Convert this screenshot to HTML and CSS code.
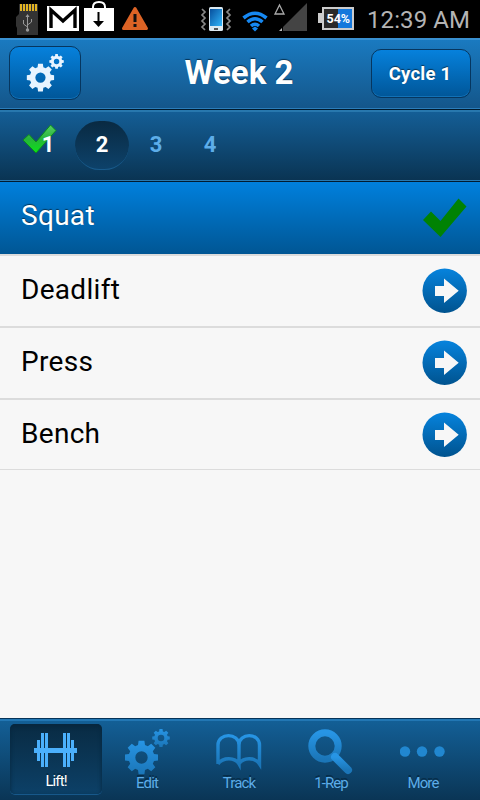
FILE: index.html
```
<!DOCTYPE html>
<html lang="en">
<head>
<meta charset="utf-8">
<title>Week 2</title>
<link rel="stylesheet" href="styles.css">
</head>
<body>
<svg class="defs" width="0" height="0">
  <defs>
    <linearGradient id="blue" x1="0" y1="0" x2="0" y2="1"><stop offset="0" stop-color="#0683dd"/><stop offset="1" stop-color="#00538f"/></linearGradient>
    <linearGradient id="icon" x1="0" y1="0" x2="0" y2="1"><stop offset="0" stop-color="#2795e5"/><stop offset="1" stop-color="#1b76b8"/></linearGradient>
    <linearGradient id="green" x1="0" y1="0" x2="0" y2="1"><stop offset="0" stop-color="#56d062"/><stop offset=".5" stop-color="#27b33b"/><stop offset="1" stop-color="#08e516"/></linearGradient>
    <linearGradient id="phone" x1="0" y1="0" x2="1" y2="1"><stop offset="0" stop-color="#064f9d"/><stop offset="1" stop-color="#31b5fa"/></linearGradient>
    <path id="gear" fill-rule="evenodd" d="M12.500-3.500 16.500-2.900V2.900L12.500 3.500 11.300 6.300 13.800 9.700 9.700 13.800 6.300 11.300 3.500 12.500 2.900 16.800H-2.900L-3.500 12.500-6.300 11.300-9.700 13.800-13.800 9.700-11.300 6.300-12.500 3.500-16.500 2.900V-2.900L-12.500-3.500-11.300-6.300-13.800-9.700-9.700-13.800-6.300-11.300-3.500-12.500-2.900-16.800H2.900L3.500-12.500 6.300-11.300 9.700-13.800 13.800-9.700 11.300-6.300ZM6.200 0A6.200 6.200 0 1 0-6.200 0 6.200 6.200 0 1 0 6.200 0Z"/>
    <symbol id="gears" viewBox="0 0 46 46"><use href="#gear" x="17.500" y="28.500"/><use href="#gear" transform="translate(37 9) scale(.53)"/></symbol>
    <symbol id="arrow" viewBox="0 0 46 46"><circle cx="22.700" cy="22.700" r="22.200" fill="url(#blue)"/><path fill="#f7f7f7" d="M13 18H22V10.500L36.700 22.700 22 35V28H13Z"/></symbol>
  </defs>
</svg>
<div class="status">
  <svg class="status-icons" width="360" height="38" viewBox="0 0 360 38">
    <path fill="#333" d="M19 4H38V35H17V28L16 26V17L19 14Z"/>
    <path stroke="#e2b321" stroke-width="2" d="M21 4V11M24 4V11M27 4V11M30 4V11M33 4V11M36 4V11"/>
    <path fill="none" stroke="#999" stroke-width="1" d="M27.500 15V31M27.500 27L23.500 24V20M27.500 25L31.500 22V19"/><circle cx="27.500" cy="30" r="1.700" fill="#999"/><path fill="#999" d="M25.500 17 27.500 14 29.500 17Z"/>
    <path fill="#fff" d="M47 6H79V31H47Z"/><path fill="none" stroke="#000" stroke-width="3.400" d="M51 28V10L63 21 75 10V28"/>
    <path fill="#fff" d="M84 8H114V31H84Z"/><path fill="none" stroke="#fff" stroke-width="2" d="M93 9V7Q93 2 99 2T105 7V9"/><path fill="none" stroke="#000" stroke-width="2" d="M98.500 12V23"/><path d="M93 21H104L98.500 27Z"/>
    <path fill="#dc6325" stroke="#dc6325" stroke-width="3" stroke-linejoin="round" d="M135 8.500 146.500 28.500H123.500Z"/><path stroke="#111" stroke-width="3" d="M135 14V22M135 24V27"/>
    <g fill="none" stroke="#888" stroke-width="1.700"><path d="M202 9l3 3-3 3 3 3-3 3 3 3-3 3 3 3M230 9l-3 3 3 3-3 3 3 3-3 3 3 3-3 3"/></g>
    <rect x="209" y="7" width="14" height="24" rx="1.500" fill="#dce9f1"/><path fill="url(#phone)" d="M210 9H222V26H210Z"/><path fill="#555" d="M214 28H218V30H214Z"/>
    <g fill="none" stroke="#1688f2" stroke-width="3.600"><path d="M243.500 18Q255 8.500 266.500 18M247.500 22Q255 15.500 262.500 22M251 26Q255 22.500 259 26"/></g><path fill="#1688f2" d="M252 28.500 255 26.500 258 28.500 255 31.500Z"/>
    <path fill="#444" d="M307 3V31H283V27Z"/><path fill="#bbb" d="M279 31 282 28V31Z"/><path fill="none" stroke="#aaa" stroke-width="1.300" d="M279.500 5 284 14H275Z"/>
    <path fill="#ccc" d="M318 13H322V23H318Z"/><rect x="323" y="8" width="30" height="21" fill="#292929" stroke="#ccc" stroke-width="2"/><path fill="#1478dc" d="M338 9H352V28H338Z"/>
    <text class="battery" x="326.500" y="22.500">54%</text>
  </svg>
  <span class="clock">12:39 AM</span>
</div>
<header class="header">
  <button class="btn settings"><svg width="38" height="38" fill="#e8f4ff"><use href="#gears"/></svg></button>
  <h1>Week 2</h1>
  <button class="btn cycle">Cycle 1</button>
</header>
<nav class="weeks">
  <a class="week done"><svg class="tick" width="36" height="31" viewBox="0 0 36 31"><path fill="url(#green)" stroke="#0d8b1c" d="M1 16 7 10.500 14 18 28.500 1 34 6.500 14 29Z"/></svg><span>1</span></a>
  <a class="week current"><span>2</span></a>
  <a class="week"><span>3</span></a>
  <a class="week"><span>4</span></a>
</nav>
<main>
  <div class="row active"><span>Squat</span><svg width="46" height="46" viewBox="0 0 46 46"><path fill="#008203" d="M1 25 9 16.500 18.500 26 36.500 3.500 44.500 11.500 18.500 42Z"/></svg></div>
  <div class="row"><span>Deadlift</span><svg width="46" height="46"><use href="#arrow"/></svg></div>
  <div class="row"><span>Press</span><svg width="46" height="46"><use href="#arrow"/></svg></div>
  <div class="row"><span>Bench</span><svg width="46" height="46"><use href="#arrow"/></svg></div>
</main>
<footer class="tabs">
  <a class="tab selected"><svg width="46" height="46" viewBox="0 0 46 46" fill="#4bb0fc"><path d="M1 19H44V24H1ZM4 11H7V32H4ZM8 4H11V38H8ZM12 4H15V38H12ZM30 4H33V38H30ZM34 4H37V38H34ZM38 11H41V32H38Z"/></svg><span>Lift!</span></a>
  <a class="tab"><svg width="46" height="46" fill="url(#icon)"><use href="#gears"/></svg><span>Edit</span></a>
  <a class="tab"><svg width="46" height="46" viewBox="0 0 46 46"><path fill="none" stroke="url(#icon)" stroke-width="3.400" d="M2 35V16C2 3.500 23 3.500 23 16V35C19 28 7 28 2 35M23 16C23 3.500 43.500 3.500 43.500 16V35C39 28 27 28 23 35"/></svg><span>Track</span></a>
  <a class="tab"><svg width="46" height="46" viewBox="0 0 46 46" fill="none" stroke="url(#icon)"><circle cx="17" cy="17" r="13.200" stroke-width="7"/><path stroke-width="8" stroke-linecap="round" d="M27 28 40 41"/></svg><span>1-Rep</span></a>
  <a class="tab"><svg width="46" height="46" viewBox="0 0 46 46" fill="#2187d0"><circle cx="5" cy="22.500" r="5.200"/><circle cx="22" cy="22.500" r="5.200"/><circle cx="39.500" cy="22.500" r="5.200"/></svg><span>More</span></a>
</footer>
</body>
</html>
```
FILE: styles.css
```
* { box-sizing: border-box; }
body {
  margin: 0;
  width: 480px;
  height: 800px;
  display: flex;
  flex-direction: column;
  background: #f7f7f7;
  font-family: Roboto, sans-serif;
  overflow: hidden;
}
.defs { position: absolute; }
svg { display: block; flex: none; }
.status {
  height: 38px;
  background: #000;
  display: flex;
  align-items: center;
}
.battery { font: bold 12.5px Roboto, sans-serif; fill: #fff; }
.clock {
  flex: 1;
  padding: 1px 0 0 7px;
  font-size: 24px;
  letter-spacing: 0.1px;
  color: #b4b4b4;
  white-space: nowrap;
}
.header {
  height: 71px;
  padding: 0 9px 2px;
  display: flex;
  align-items: center;
  justify-content: space-between;
  background: linear-gradient(#1a7ac0, #14568a);
  border-top: 2px solid #3990d0;
  border-bottom: 1px solid #2b7dba;
}
.header h1 {
  margin: 0 0 0 26px;
  flex: 1;
  text-align: center;
  font-size: 33px;
  line-height: 40px;
  color: #fff;
  text-shadow: 0 -1px 1px #073456;
}
.btn {
  font-family: inherit;
  border: 1px solid #06365f;
  border-radius: 10px;
  background: linear-gradient(#0681dc, #005698);
  box-shadow: inset 0 -1px #1271b6;
  color: #fff;
  padding: 0;
  display: flex;
  align-items: center;
  justify-content: center;
}
.settings { width: 72px; height: 54px; }
.cycle {
  width: 100px;
  height: 49px;
  margin-top: 1px;
  padding-right: 2px;
  font-size: 18.5px;
  letter-spacing: 0.2px;
  font-weight: bold;
  text-shadow: 0 -1px 1px #073456;
}
.weeks {
  height: 73px;
  padding: 11px 21px 0;
  display: flex;
  background: linear-gradient(#2878ae 0 2px, #145e96 2px, #0a3453 70px, #2779b1 70px 71px, #001b30 71px 72px, #3b9ce0 72px);
  border-top: 1px solid #001a2c;
}
.week {
  position: relative;
  width: 54px;
  height: 49px;
  line-height: 48px;
  text-align: center;
  font-size: 22px;
  font-weight: bold;
  color: #5dade9;
}
.week.done, .week.current { color: #fff; }
.week span { position: relative; }
.tick { position: absolute; left: 1px; top: 3px; }
.current {
  border-radius: 27px;
  background: linear-gradient(#092a42, #0d426a);
  border-bottom: 1px solid #195b8c;
}
main { flex: 1; }
.row {
  height: 72px;
  padding: 0 12px 0 21px;
  display: flex;
  align-items: center;
  justify-content: space-between;
  font-size: 28px;
  letter-spacing: 0.3px;
  color: #000;
  border-bottom: 2px solid #dcdcdc;
}
.row span { position: relative; top: -2px; }
.row.active {
  height: 74px;
  color: #fff;
  background: linear-gradient(#0080dd, #005694);
  text-shadow: 0 -1px 1px #073456;
}
.row.active span { top: -3px; }
.row:last-child { height: 70px; border-bottom-width: 1px; }
.row:last-child span { top: -1px; }
.tabs {
  height: 82px;
  padding: 5px 10px 0;
  display: flex;
  background: linear-gradient(#2277b4 0 2px, #135f96 2px, #0a3555);
  border-top: 1px solid #063358;
}
.tab {
  width: 92px;
  height: 70px;
  display: flex;
  flex-direction: column;
  align-items: center;
  padding-top: 5px;
  padding-right: 2px;
  font-size: 15px;
  line-height: 18px;
  letter-spacing: -0.9px;
  color: #5dade9;
  text-shadow: 0 -2px #072d49;
}
.tab span { margin-top: -1px; }
.tab.selected {
  padding-right: 0;
  color: #fff;
  background: linear-gradient(#092b43, #0c4067);
  border-radius: 5px;
  box-shadow: inset 0 2px 4px #07263d, 0 1px #17588a;
}
.selected span { margin-top: -3px; }
```
